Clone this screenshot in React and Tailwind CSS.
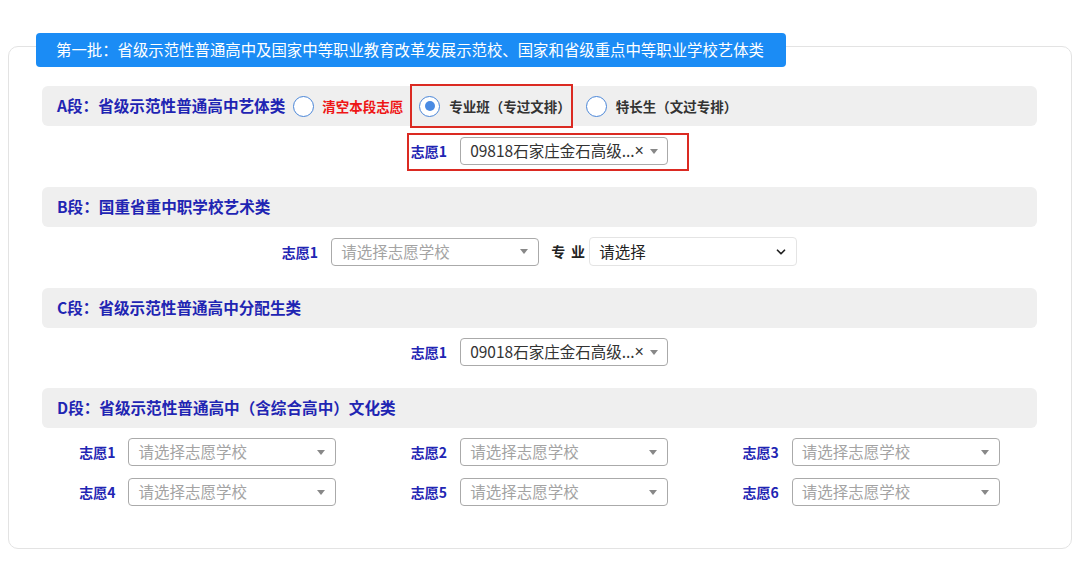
import { ChevronDown } from 'lucide-react';

const font = { fontFamily: '"Noto Sans CJK SC", "Noto Sans", sans-serif' };

function Radio({ checked }) {
  return (
    <span className="flex h-[21px] w-[21px] shrink-0 items-center justify-center rounded-full border-[1.5px] border-[#4a86d8] bg-white">
      {checked && <span className="h-[10px] w-[10px] rounded-full bg-[#4a8be3]" />}
    </span>
  );
}

function Label({ children }) {
  return <span className="shrink-0 whitespace-nowrap text-[14px] font-bold leading-none text-[#1f25b3]">{children}</span>;
}

function Select2({ value, clear }) {
  return (
    <div className="flex h-[28px] w-[208px] shrink-0 items-center rounded-[4px] border border-[#aaaaaa] bg-white pl-[9px] pr-[10px]">
      <span className={`flex-1 whitespace-nowrap text-[15.5px] leading-none ${value ? 'text-[#333]' : 'text-[#a3a3a3]'}`}>
        {value || '请选择志愿学校'}
      </span>
      {clear && (
        <span className="mr-[6px] text-[16px] leading-none text-[#333]" style={{ fontFamily: '"Liberation Sans", sans-serif' }}>
          ×
        </span>
      )}
      <span className="h-0 w-0 border-x-[4px] border-t-[5px] border-x-transparent border-t-[#888]" />
    </div>
  );
}

function Field({ n, value, clear }) {
  return (
    <div className="flex items-center gap-[13px]">
      <Label>志愿{n}</Label>
      <Select2 value={value} clear={clear} />
    </div>
  );
}

function Header({ children }) {
  return (
    <div className="flex h-[40px] items-center whitespace-nowrap rounded-[6px] bg-[#efefef] pl-[15px] text-[15.6px] font-bold text-[#1f25b3]">
      {children}
    </div>
  );
}

export default function App() {
  return (
    <div className="min-h-screen bg-white px-[8px] pt-[46px]" style={font}>
      <div className="rounded-[10px] border border-[#e3e3e3] pb-[42px] pl-[33px] pr-[34px]">
        <div className="-mt-[14px] ml-[-6px] flex h-[34px] w-[750px] items-center whitespace-nowrap rounded-[4px] bg-[#1b8cf5] pl-[20px] text-[15.4px] text-white">
          第一批：省级示范性普通高中及国家中等职业教育改革发展示范校、国家和省级重点中等职业学校艺体类
        </div>

        {/* A段 */}
        <div className="mt-[19px]">
          <Header>
            <span>A段：省级示范性普通高中艺体类</span>
            <span className="ml-[8px]"><Radio /></span>
            <span className="ml-[8px] text-[13.5px] text-[#ee1515]">清空本段志愿</span>
            <div className="ml-[7px] flex h-[44px] items-center gap-[9px] border-2 border-[#db2a22] pl-[7px] pr-0 text-[13.5px] text-[#333]">
              <Radio checked />
              <span>专业班（专过文排）</span>
            </div>
            <span className="ml-[13px]"><Radio /></span>
            <span className="ml-[9px] text-[13.5px] text-[#333]">特长生（文过专排）</span>
          </Header>
          <div className="mt-[7px] flex justify-center">
            <div className="ml-[17px] flex items-center gap-[13px] border-2 border-[#db2a22] pb-[4px] pl-[2px] pr-[19px] pt-[2px]">
              <Label>志愿1</Label>
              <Select2 value="09818石家庄金石高级..." clear />
            </div>
          </div>
        </div>

        {/* B段 */}
        <div className="mt-[16px]">
          <Header>B段：国重省重中职学校艺术类</Header>
          <div className="mt-[10px] flex items-center justify-center">
            <Field n={1} />
            <span className="ml-[12px] whitespace-nowrap text-[14px] font-bold tracking-[6px] text-[#222]">专业</span>
            <div className="ml-[-2px] flex h-[29px] w-[208px] items-center justify-between rounded-[4px] border border-[#e4e4e4] bg-white pl-[9px] pr-[8px] text-[15.5px] text-[#222]">
              <span>请选择</span>
              <ChevronDown size={14} strokeWidth={3} className="text-[#222]" />
            </div>
          </div>
        </div>

        {/* C段 */}
        <div className="mt-[22px]">
          <Header>C段：省级示范性普通高中分配生类</Header>
          <div className="mt-[10px] flex justify-center">
            <Field n={1} value="09018石家庄金石高级..." clear />
          </div>
        </div>

        {/* D段 */}
        <div className="mt-[22px]">
          <Header>D段：省级示范性普通高中（含综合高中）文化类</Header>
          <div className="mt-[10px] grid grid-cols-3 justify-items-center gap-y-[12px]">
            {[1, 2, 3, 4, 5, 6].map((n) => (
              <Field key={n} n={n} />
            ))}
          </div>
        </div>
      </div>
    </div>
  );
}
